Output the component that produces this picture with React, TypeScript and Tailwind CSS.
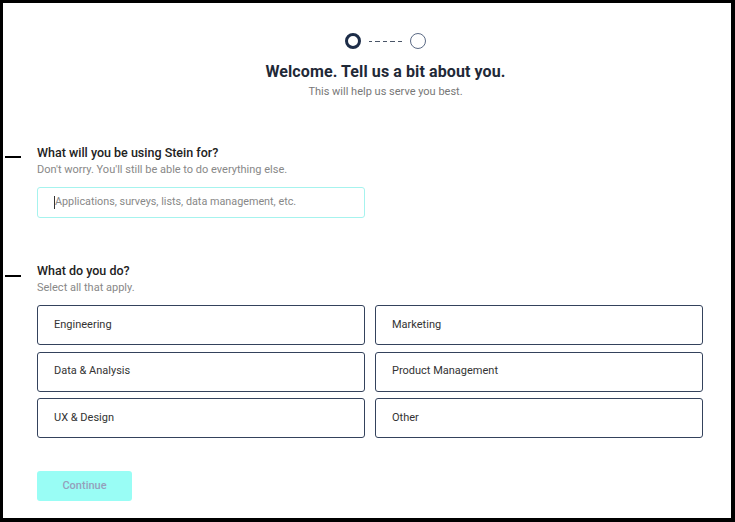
import React from 'react';

const roles = ['Engineering', 'Marketing', 'Data & Analysis', 'Product Management', 'UX & Design', 'Other'];

const App: React.FC = () => {
  return (
    <div className="w-[735px] h-[522px] bg-white border-[3px] border-r-4 border-b-4 border-black font-['Roboto',sans-serif] overflow-hidden">
      <div className="pl-[34px]">
        <div className="flex flex-col items-center pl-[3px] pt-[30px]">
          <div className="flex items-center gap-[8px] h-[16px]">
            <span className="w-[16px] h-[16px] rounded-full border-[3px] border-[#1d2d48]" />
            <span className="w-[33px] h-[1px] border-t border-dashed border-[#4a5568] [border-image:repeating-linear-gradient(90deg,#4a5568_0_4px,transparent_4px_7px)_1]" />
            <span className="w-[16px] h-[16px] rounded-full border border-[#5b6a85]" />
          </div>
          <h1 className="mt-[13px] text-[16px] leading-[20px] font-bold text-[#1f2937] tracking-[0.1px]">Welcome. Tell us a bit about you.</h1>
          <p className="mt-[2px] text-[11px] leading-[16px] text-[#777]">This will help us serve you best.</p>
        </div>

        <div className="mt-[45px] relative">
          <span className="absolute left-[-32px] top-[11px] w-[16px] h-[1.5px] bg-black" />
          <h2 className="text-[12.5px] leading-[16px] font-medium text-[#222]">What will you be using Stein for?</h2>
          <p className="mt-[1px] text-[11px] leading-[16px] text-[#888]">Don't worry. You'll still be able to do everything else.</p>
          <div className="mt-[9px] w-[328px] h-[31px] rounded-[3px] border border-[#a6f3ee] flex items-center pl-[16px]">
            <span className="w-[1px] h-[13px] bg-[#333]" />
            <span className="text-[10.8px] text-[#888]">Applications, surveys, lists, data management, etc.</span>
          </div>
        </div>

        <div className="mt-[45px] relative">
          <span className="absolute left-[-32px] top-[12px] w-[16px] h-[1.5px] bg-black" />
          <h2 className="text-[12.5px] leading-[16px] font-medium text-[#222]">What do you do?</h2>
          <p className="mt-[1px] text-[11px] leading-[16px] text-[#888]">Select all that apply.</p>
          <div className="mt-[9px] grid grid-cols-2 gap-x-[10px] gap-y-[6.5px] w-[666px]">
            {roles.map((r) => (
              <button key={r} className="h-[40px] rounded-[3px] border-[1.5px] border-[#34425c] text-left pl-[16px] text-[11px] text-[#333]">
                {r}
              </button>
            ))}
          </div>
        </div>

        <button className="mt-[33px] w-[95px] h-[30px] rounded-[3px] bg-[#99fdf5] text-[11px] font-medium text-[#95a0bb]">Continue</button>
      </div>
    </div>
  );
};

export default App;
